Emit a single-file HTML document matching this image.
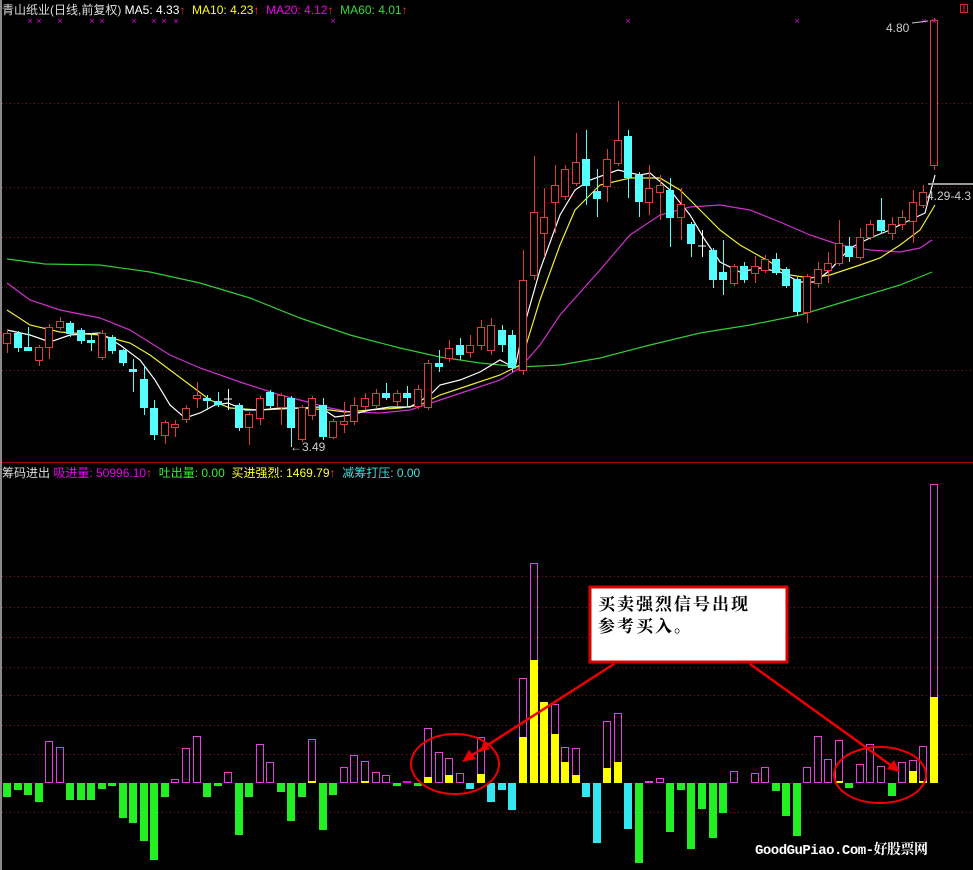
<!DOCTYPE html>
<html><head><meta charset="utf-8">
<style>
html,body{margin:0;padding:0;background:#000;width:973px;height:870px;overflow:hidden}
body{position:relative;font-family:"Liberation Sans","Noto Sans CJK SC",sans-serif;font-size:12px}
.t{position:absolute;white-space:nowrap;line-height:14px}
svg{position:absolute;left:0;top:0}
</style></head><body>
<svg id="s" width="973" height="870" viewBox="0 0 973 870">
<rect x="0" y="0" width="2" height="870" fill="#8a8a8a"/>
<line x1="2" y1="462.5" x2="973" y2="462.5" stroke="#a00000" stroke-width="1"/>
<g id="grid" stroke="#8a1818" stroke-dasharray="1,3" stroke-width="1"></g>
<g id="ma"></g>
<g id="c"></g>
<g id="b"></g>
<rect x="960.5" y="4.5" width="7" height="8" fill="none" stroke="#c03030"/>
<line x1="964" y1="5" x2="964" y2="12" stroke="#c03030"/>
<line x1="912" y1="23" x2="928" y2="21" stroke="#ccc"/>
<line x1="928" y1="184" x2="973" y2="184" stroke="#999" stroke-width="2"/>
<ellipse cx="455" cy="764" rx="44" ry="30" fill="none" stroke="#e00" stroke-width="2"/>
<ellipse cx="880" cy="775" rx="46" ry="28" fill="none" stroke="#e00" stroke-width="2"/>
<line x1="614" y1="664" x2="466" y2="759" stroke="#e00" stroke-width="2.5"/>
<polygon points="462,762 469,750 476,759" fill="#e00"/>
<polygon points="480,752 484,741 490,749" fill="#e00"/>
<line x1="750" y1="664" x2="896" y2="769" stroke="#e00" stroke-width="2.5"/>
<polygon points="900,772 887,769 894,760" fill="#e00"/>
<rect x="590" y="587" width="197" height="75" fill="#fff" stroke="#d00" stroke-width="3"/>
</svg>
<div class="t" style="left:2px;top:3px;color:#ddd">青山纸业(日线,前复权) <span style="color:#fff">MA5: 4.33</span><span style="color:#f33">↑</span> <span style="color:#ff0">&nbsp;MA10: 4.23</span><span style="color:#f33">↑</span> <span style="color:#e0e">&nbsp;MA20: 4.12</span><span style="color:#f33">↑</span> <span style="color:#3d3">&nbsp;MA60: 4.01</span><span style="color:#f33">↑</span></div>
<div class="t" style="left:2px;top:466px;color:#ddd">筹码进出 <span style="color:#e0e">吸进量: 50996.10</span><span style="color:#f33">↑</span> <span style="color:#3e3">&nbsp;吐出量: 0.00</span> <span style="color:#ff3">&nbsp;买进强烈: 1469.79</span><span style="color:#f33">↑</span> <span style="color:#4dd">&nbsp;减筹打压: 0.00</span></div>
<div class="t" style="left:886px;top:21px;color:#ccc">4.80</div>
<div class="t" style="left:927px;top:189px;color:#ccc">4.29-4.3</div>
<div class="t" style="left:290px;top:440px;color:#ccc">←3.49</div>
<div class="t" style="left:598px;top:594px;color:#000;font-family:'Liberation Serif','Noto Serif CJK SC',serif;font-size:17px;line-height:22px;letter-spacing:2px;font-weight:bold">买卖强烈信号出现<br>参考买入。</div>
<div class="t" style="left:755px;top:844px;color:#fff;font-family:'Liberation Mono','Noto Serif CJK SC',monospace;font-size:14px;font-weight:bold;letter-spacing:-0.5px">GoodGuPiao.Com-好股票网</div>
<script>
var NS="http://www.w3.org/2000/svg";
function el(p,t,a){var e=document.createElementNS(NS,t);for(var k in a)e.setAttribute(k,a[k]);document.getElementById(p).appendChild(e);return e;}
[103,187,237,287,370,576,607,637,667,695,725,754,812].forEach(function(y){el("grid","line",{x1:2,y1:y+.5,x2:973,y2:y+.5});});
function X(i){return 3+i*10.53;}
var C=[[0,'r',333,343,329,353],[1,'c',333,348,331,352],[2,'c',347,351,327,351],[3,'r',347,360,345,366],[4,'r',327,347,324,359],[5,'r',321,327,317,330],[6,'c',323,334,321,337],[7,'c',330,341,328,344],[8,'c',340,343,333,351],[9,'r',333,357,330,360],[10,'c',337,351,335,354],[11,'c',350,363,349,366],[12,'c',369,372,359,392],[13,'c',379,408,366,415],[14,'c',408,435,400,440],[15,'r',422,435,420,444],[16,'r',424,427,420,437],[17,'r',408,419,405,423],[18,'r',395,398,382,408],[19,'c',398,401,395,410],[20,'c',401,405,392,407],[21,'w',399,400,389,410],[22,'c',405,428,403,431],[23,'r',414,427,412,445],[24,'r',398,418,396,425],[25,'c',392,406,390,408],[26,'r',395,407,393,425],[27,'c',398,428,396,447],[28,'r',407,439,405,442],[29,'r',398,415,396,420],[30,'c',405,437,398,440],[31,'r',421,437,419,439],[32,'r',421,424,402,433],[33,'r',405,421,397,425],[34,'r',398,406,393,410],[35,'r',393,405,389,408],[36,'c',393,398,383,400],[37,'r',393,401,390,406],[38,'c',393,398,386,407],[39,'r',389,406,385,409],[40,'r',363,407,360,410],[41,'c',363,367,350,372],[42,'r',348,358,340,362],[43,'c',345,355,338,360],[44,'r',345,352,335,358],[45,'r',327,345,320,350],[46,'r',325,350,318,355],[47,'c',330,345,325,352],[48,'c',335,368,330,372],[49,'r',280,370,250,375],[50,'r',212,275,156,280],[51,'r',217,233,188,257],[52,'r',185,202,165,233],[53,'r',169,196,165,200],[54,'r',162,183,133,186],[55,'c',159,186,130,205],[56,'c',191,199,169,217],[57,'r',159,186,149,202],[58,'r',140,163,101,166],[59,'c',136,178,130,198],[60,'c',175,202,172,217],[61,'r',188,202,165,215],[62,'r',185,192,175,220],[63,'c',190,218,178,247],[64,'r',204,217,188,240],[65,'c',224,244,222,257],[66,'w',246,247,230,257],[67,'c',250,280,248,288],[68,'c',272,280,240,295],[69,'r',266,283,264,286],[70,'c',266,280,262,283],[71,'r',266,273,256,283],[72,'r',259,270,255,273],[73,'c',259,273,253,275],[74,'c',269,286,267,288],[75,'c',279,312,277,316],[76,'r',276,312,274,323],[77,'r',269,283,262,288],[78,'r',263,270,252,283],[79,'r',243,263,220,266],[80,'c',246,257,237,262],[81,'r',237,257,228,260],[82,'r',224,237,220,240],[83,'c',220,231,198,234],[84,'r',224,233,217,240],[85,'r',217,224,210,230],[86,'r',202,221,190,243],[87,'r',192,205,185,208],[88,'r',20,165,18,170]];
C.forEach(function(d){var x=X(d[0]),cx=Math.round(x+4)+.5;var col=d[1]=='r'?'#e03c3c':(d[1]=='c'?'#54ffff':'#fff');
el("c","line",{x1:cx,y1:d[4],x2:cx,y2:d[5],stroke:col});
if(d[1]=='r')el("c","rect",{x:Math.round(x)+.5,y:d[2]+.5,width:7,height:Math.max(1,d[3]-d[2]),fill:"#000",stroke:col});
else if(d[1]=='c')el("c","rect",{x:Math.round(x),y:d[2],width:8,height:Math.max(1,d[3]-d[2]),fill:col});
else el("c","line",{x1:Math.round(x),y1:d[2],x2:Math.round(x)+8,y2:d[2],stroke:col});});
function pl(pts,col){el("ma","polyline",{points:pts,fill:"none",stroke:col,"stroke-width":1.2});}
pl("7,259 45,264 100,265 150,272 200,283 250,298 300,318 350,335 400,348 440,357 480,363 520,367 560,365 600,358 650,345 700,333 750,325 800,315 850,300 900,285 932,272","#3c3");
pl("7,283 30,300 60,310 100,318 130,330 170,355 200,368 240,382 280,395 300,400 330,408 350,412 380,413 410,410 440,400 470,390 500,380 520,368 540,345 560,315 600,270 630,235 660,215 690,207 720,205 750,210 780,222 810,235 840,245 870,250 900,252 920,248 932,240","#d030d0");
pl("7,310 30,325 60,332 100,335 130,343 150,355 170,370 190,385 210,400 230,408 260,410 300,408 330,410 345,412 370,410 400,408 420,405 440,395 470,385 500,375 520,365 540,300 560,245 575,210 600,185 630,178 660,178 680,190 700,210 720,230 740,245 770,262 790,275 810,278 830,275 860,265 880,258 900,245 920,230 935,205","#ee3");
pl("7,330 30,335 50,342 70,335 100,333 120,345 140,360 155,380 170,405 185,418 200,413 215,405 228,403 245,410 260,410 280,408 300,408 320,407 335,417 350,415 370,410 390,407 410,407 430,395 440,385 460,380 480,372 500,360 515,368 523,330 540,270 560,215 575,190 590,180 618,170 640,175 650,173 670,190 690,215 705,240 720,262 740,272 760,268 780,272 800,282 815,282 830,270 850,248 870,238 890,230 910,220 925,213 935,175","#fff");
[30,39,60,92,102,134,154,164,176,333,628,797,924,934].forEach(function(x){var t=document.createElementNS(NS,"text");t.setAttribute("x",x);t.setAttribute("y",24);t.setAttribute("fill","#e0e");t.setAttribute("font-size","9");t.setAttribute("text-anchor","middle");t.textContent="×";document.getElementById("b").appendChild(t);});
var B=[[0,'g',797],[1,'g',790],[2,'g',795],[3,'g',802],[4,'p',741],[5,'p',747],[6,'g',800],[7,'g',800],[8,'g',800],[9,'g',789],[10,'g',786],[11,'g',818],[12,'g',823],[13,'g',841],[14,'g',860],[15,'g',797],[16,'p',779],[17,'p',748],[18,'p',736],[19,'g',797],[20,'g',786],[21,'p',772],[22,'g',835],[23,'g',797],[24,'p',744],[25,'p',762],[26,'g',792],[27,'g',821],[28,'g',797],[29,'p',739,781],[30,'g',830],[31,'g',795],[32,'p',767],[33,'p',755],[34,'p',761,781],[35,'p',772],[36,'p',775],[37,'g',786],[38,'m',782],[39,'g',786],[40,'p',728,777],[41,'p',752],[42,'p',758,775],[43,'p',773],[44,'c',789],[45,'p',737,774],[46,'c',802],[47,'c',790],[48,'c',810],[49,'p',678,737],[50,'p',563,660],[51,'y',702],[52,'p',704,734],[53,'p',747,762],[54,'p',748,775],[55,'c',797],[56,'c',843],[57,'p',721,768],[58,'p',713,762],[59,'c',829],[60,'g',863],[61,'p',781],[62,'p',778],[63,'g',832],[64,'g',790],[65,'g',849],[66,'g',809],[67,'g',838],[68,'g',813],[69,'p',771],[71,'p',773],[72,'p',767],[73,'g',791],[74,'g',816],[75,'g',836],[76,'p',767],[77,'p',736],[78,'p',759],[79,'p',740,781],[80,'g',788],[81,'p',764],[82,'p',744],[83,'p',766],[84,'g',796],[85,'p',762],[86,'p',760,771],[87,'p',746,781],[88,'p',484,697]];
var base=783;
B.forEach(function(d){var x=Math.round(X(d[0]));
if(d[1]=='g'||d[1]=='c')el("b","rect",{x:x,y:base,width:8,height:d[2]-base,fill:d[1]=='g'?'#22f022':'#33e6f0'});
else if(d[1]=='y')el("b","rect",{x:x,y:d[2],width:8,height:base-d[2],fill:'#ff0'});
else if(d[1]=='m')el("b","rect",{x:x,y:781,width:8,height:2,fill:'#e0e'});
else{el("b","rect",{x:x+.5,y:d[2]+.5,width:7,height:base-d[2]-1,fill:"none",stroke:"#e040e0","stroke-width":1});
if(d[3])el("b","rect",{x:x,y:d[3],width:8,height:base-d[3],fill:'#ff0'});}});
</script>
</body></html>
